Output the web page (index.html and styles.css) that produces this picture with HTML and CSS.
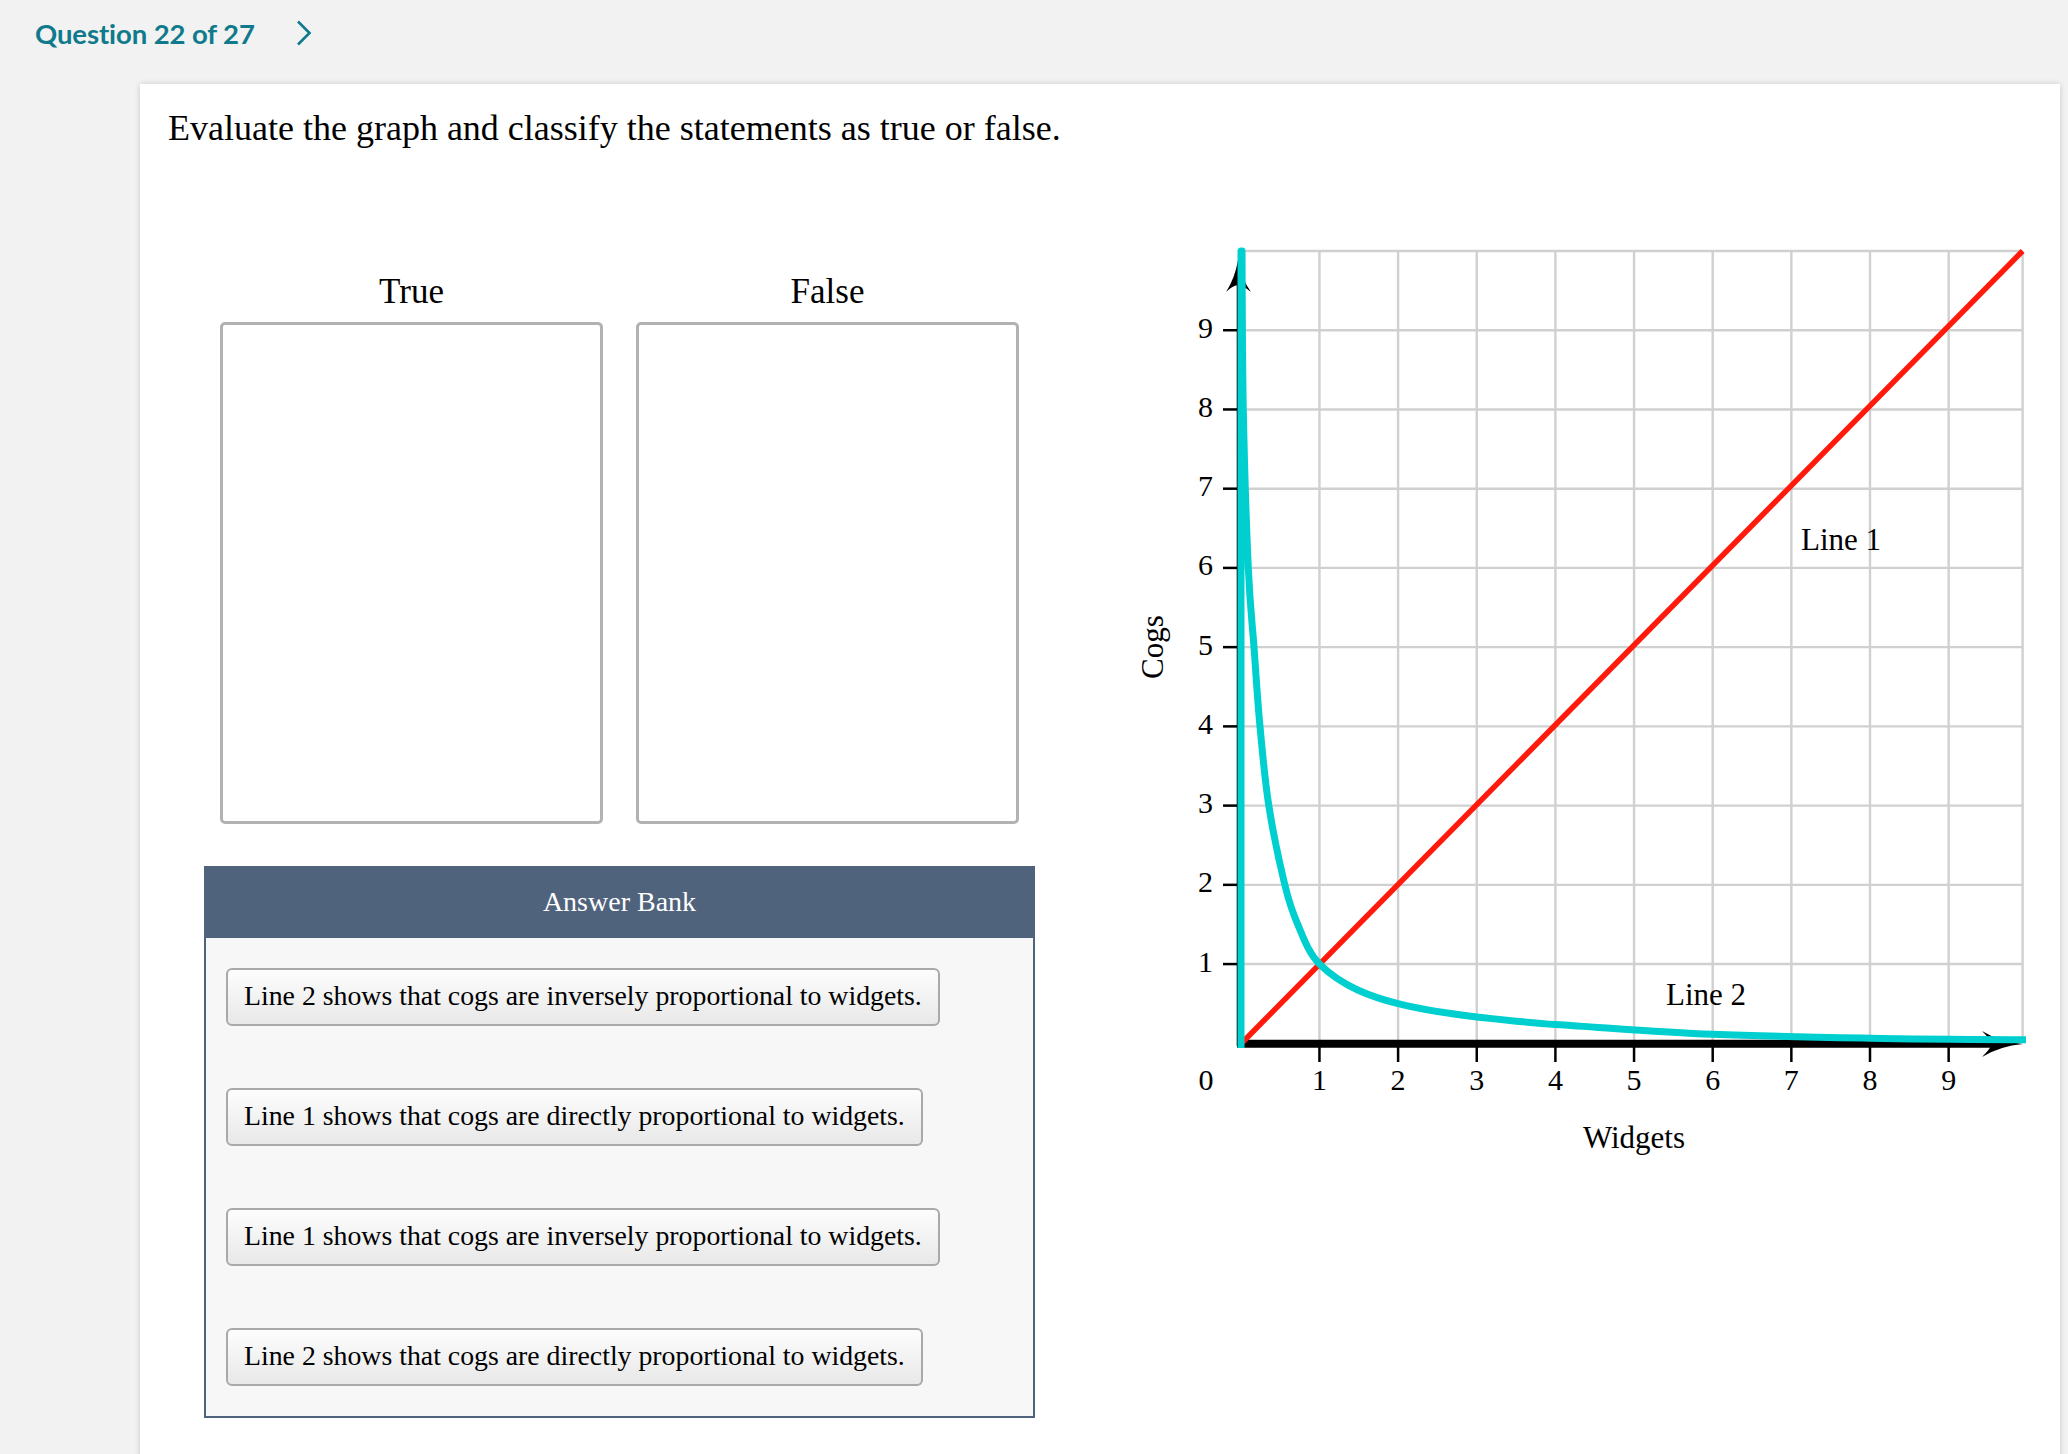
FILE: index.html
```html
<!DOCTYPE html>
<html lang="en">
<head>
<meta charset="utf-8">
<title>Question 22 of 27</title>
<link rel="stylesheet" href="styles.css">
</head>
<body>
<header class="topbar">
  <span class="qnum">Question 22 of 27</span>
  <svg class="chev" width="16" height="26" viewBox="0 0 16 26"><path d="M2 1.5 L13.5 13 L2 24.5" /></svg>
</header>
<main class="card">
  <h1 class="prompt">Evaluate the graph and classify the statements as true or false.</h1>
  <div class="content">
    <div class="left">
      <div class="bins">
        <div class="bin">
          <div class="bin-label">True</div>
          <div class="bin-box"></div>
        </div>
        <div class="bin">
          <div class="bin-label">False</div>
          <div class="bin-box"></div>
        </div>
      </div>
      <section class="bank">
        <div class="bank-head">Answer Bank</div>
        <div class="bank-body">
          <div class="chip">Line 2 shows that cogs are inversely proportional to widgets.</div>
          <div class="chip">Line 1 shows that cogs are directly proportional to widgets.</div>
          <div class="chip">Line 1 shows that cogs are inversely proportional to widgets.</div>
          <div class="chip">Line 2 shows that cogs are directly proportional to widgets.</div>
        </div>
      </section>
    </div>
    <svg class="graph" width="910" height="940" viewBox="0 0 910 940">
      <g class="grid">
        <line x1="199.45" y1="11" x2="199.45" y2="803"/>
        <line x1="278.1" y1="11" x2="278.1" y2="803"/>
        <line x1="356.75" y1="11" x2="356.75" y2="803"/>
        <line x1="435.4" y1="11" x2="435.4" y2="803"/>
        <line x1="514.05" y1="11" x2="514.05" y2="803"/>
        <line x1="592.7" y1="11" x2="592.7" y2="803"/>
        <line x1="671.35" y1="11" x2="671.35" y2="803"/>
        <line x1="750" y1="11" x2="750" y2="803"/>
        <line x1="828.65" y1="11" x2="828.65" y2="803"/>
        <line x1="902.6" y1="11" x2="902.6" y2="803"/>
        <line x1="121" y1="724.07" x2="902.6" y2="724.07"/>
        <line x1="121" y1="644.84" x2="902.6" y2="644.84"/>
        <line x1="121" y1="565.61" x2="902.6" y2="565.61"/>
        <line x1="121" y1="486.38" x2="902.6" y2="486.38"/>
        <line x1="121" y1="407.15" x2="902.6" y2="407.15"/>
        <line x1="121" y1="327.92" x2="902.6" y2="327.92"/>
        <line x1="121" y1="248.69" x2="902.6" y2="248.69"/>
        <line x1="121" y1="169.46" x2="902.6" y2="169.46"/>
        <line x1="121" y1="90.23" x2="902.6" y2="90.23"/>
        <line x1="121" y1="11" x2="902.6" y2="11"/>
      </g>
      <g class="ticks">
        <line x1="103" y1="724.07" x2="118" y2="724.07"/>
        <line x1="103" y1="644.84" x2="118" y2="644.84"/>
        <line x1="103" y1="565.61" x2="118" y2="565.61"/>
        <line x1="103" y1="486.38" x2="118" y2="486.38"/>
        <line x1="103" y1="407.15" x2="118" y2="407.15"/>
        <line x1="103" y1="327.92" x2="118" y2="327.92"/>
        <line x1="103" y1="248.69" x2="118" y2="248.69"/>
        <line x1="103" y1="169.46" x2="118" y2="169.46"/>
        <line x1="103" y1="90.23" x2="118" y2="90.23"/>
        <line x1="199.45" y1="804" x2="199.45" y2="822"/>
        <line x1="278.1" y1="804" x2="278.1" y2="822"/>
        <line x1="356.75" y1="804" x2="356.75" y2="822"/>
        <line x1="435.4" y1="804" x2="435.4" y2="822"/>
        <line x1="514.05" y1="804" x2="514.05" y2="822"/>
        <line x1="592.7" y1="804" x2="592.7" y2="822"/>
        <line x1="671.35" y1="804" x2="671.35" y2="822"/>
        <line x1="750" y1="804" x2="750" y2="822"/>
        <line x1="828.65" y1="804" x2="828.65" y2="822"/>
      </g>
      <line class="yaxis" x1="118" y1="806" x2="118" y2="30"/>
      <path class="arrow" d="M118 20 Q121 38 131 52 Q124 46 118 45 Q112 46 106 52 Q115 38 118 20 Z"/>
      <line class="xaxis" x1="117" y1="803.8" x2="878" y2="803.8"/>
      <path class="arrow" d="M903 804 Q880 806 862 817 Q870 809 872 804 Q870 799 862 791 Q880 802 903 804 Z"/>
      <g class="nums">
        <text x="93" y="731.5">1</text>
        <text x="93" y="652.3">2</text>
        <text x="93" y="573.1">3</text>
        <text x="93" y="493.9">4</text>
        <text x="93" y="414.6">5</text>
        <text x="93" y="335.4">6</text>
        <text x="93" y="256.2">7</text>
        <text x="93" y="177">8</text>
        <text x="93" y="97.7">9</text>
      </g>
      <g class="nums centered">
        <text x="86" y="850">0</text>
        <text x="199.45" y="850">1</text>
        <text x="278.1" y="850">2</text>
        <text x="356.75" y="850">3</text>
        <text x="435.4" y="850">4</text>
        <text x="514.05" y="850">5</text>
        <text x="592.7" y="850">6</text>
        <text x="671.35" y="850">7</text>
        <text x="750" y="850">8</text>
        <text x="828.65" y="850">9</text>
      </g>
      <line class="line1" x1="120.8" y1="804" x2="902.6" y2="11"/>
      <path class="line2" d="M121 808 L121 11 L122 11 C122.2 37.4 122.25 116.7 123.3 169.5 C124.35 222.3 126.5 288.3 128.3 327.9 C130.1 367.5 132.05 380.8 134 407.2 C135.95 433.6 137.5 460 140 486.4 C142.5 512.8 144.7 539.2 148.8 565.6 C152.9 592 160 625 164.8 644.8 C169.6 664.6 172 671.3 177.8 684.5 C183.6 697.7 188.45 712.97 199.45 724.07 C212.56 737.28 225.67 744.61 238.78 750.48 C251.89 756.35 264.99 760.39 278.1 763.7 C304.32 770.3 330.53 773.97 356.75 776.9 C382.97 779.83 409.18 782.85 435.4 784.5 C487.83 787.8 540.27 792.46 592.7 794.3 C645.13 796.14 697.57 797.15 750 798.2 C802 799.24 854 799.44 906 799.7"/>
      <text class="lbl" x="681" y="310">Line 1</text>
      <text class="lbl" x="546" y="765">Line 2</text>
      <text class="lbl centered" x="514" y="908">Widgets</text>
      <text class="lbl centered" transform="translate(43 407) rotate(-90)">Cogs</text>
    </svg>
  </div>
</main>
</body>
</html>
```
FILE: styles.css
```css
html, body {
  margin: 0;
  padding: 0;
}
body {
  background: #f2f2f2;
  font-family: "Liberation Serif", "Times New Roman", serif;
  color: #000;
  width: 2068px;
  height: 1454px;
  overflow: hidden;
}
.topbar {
  height: 66px;
  margin-bottom: 18px;
  padding-left: 35px;
  display: flex;
  align-items: center;
}
.qnum {
  font-family: Lato, "Open Sans", sans-serif;
  font-weight: 700;
  font-size: 27.5px;
  color: #0f7a8c;
  letter-spacing: -0.1px;
}
.chev {
  margin-left: 41px;
}
.chev path {
  fill: none;
  stroke: #0f7a8c;
  stroke-width: 2.6;
}
.card {
  display: block;
  margin: 0 8px 0 140px;
  background: #fff;
  box-shadow: 0 0 6px rgba(0, 0, 0, 0.16);
  padding: 24px 30px 40px 28px;
  min-height: 1400px;
  box-sizing: border-box;
}
.prompt {
  margin: 0;
  font-weight: normal;
  font-size: 36px;
  line-height: 40px;
}
.content {
  display: flex;
  align-items: flex-start;
  margin-top: 92px;
}
.left {
  width: 831px;
  margin-left: 36px;
  flex-shrink: 0;
}
.bins {
  display: flex;
  justify-content: center;
  gap: 33px;
  padding-top: 32px;
}
.bin {
  width: 383px;
}
.bin-label {
  font-size: 35px;
  line-height: 40px;
  text-align: center;
  margin-bottom: 10px;
}
.bin-box {
  height: 502px;
  box-sizing: border-box;
  border: 3px solid #b2b2b2;
  border-radius: 5px;
  background: #fff;
}
.bank {
  margin-top: 42px;
  border: 2px solid #50637c;
  background: #f7f7f7;
}
.bank-head {
  height: 70px;
  background: #50637c;
  color: #fff;
  font-size: 28px;
  line-height: 68px;
  text-align: center;
}
.bank-body {
  display: flex;
  flex-direction: column;
  align-items: flex-start;
  gap: 62px;
  padding: 30px 20px 30px 20px;
}
.chip {
  height: 58px;
  box-sizing: border-box;
  border: 2px solid #a9a9a9;
  border-radius: 6px;
  background: linear-gradient(to bottom, #fdfdfd, #e8e8e8);
  padding: 0 16px;
  font-size: 27.8px;
  line-height: 52px;
  white-space: nowrap;
}
.graph {
  flex-shrink: 0;
  margin-left: 85px;
  display: block;
}
.grid line {
  stroke: #d0d0d0;
  stroke-width: 2.4;
}
.ticks line {
  stroke: #000;
  stroke-width: 2.5;
}
.yaxis {
  stroke: #000;
  stroke-width: 2.6;
}
.xaxis {
  stroke: #000;
  stroke-width: 8;
}
.arrow {
  fill: #000;
}
.nums text {
  font-family: "Liberation Serif", "Times New Roman", serif;
  font-size: 30px;
  fill: #000;
  text-anchor: end;
}
.nums.centered text {
  text-anchor: middle;
}
.line1 {
  stroke: #ff1a0c;
  stroke-width: 5.5;
}
.line2 {
  fill: none;
  stroke: #00cfd0;
  stroke-width: 7;
  stroke-linejoin: round;
}
.lbl {
  font-family: "Liberation Serif", "Times New Roman", serif;
  font-size: 31px;
  fill: #000;
}
.lbl.centered {
  text-anchor: middle;
}
```
